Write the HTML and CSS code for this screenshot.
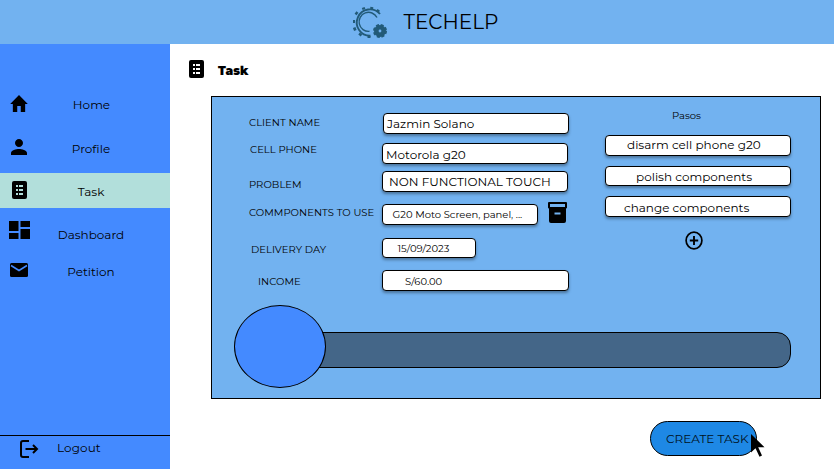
FILE: index.html
```html
<!DOCTYPE html>
<html lang="en">
<head>
<meta charset="utf-8">
<title>Techelp</title>
<link rel="stylesheet" href="styles.css">
</head>
<body>
<header class="topbar">
  <svg class="logo" width="36" height="36" viewBox="0 0 36 36" fill="none" stroke="#225a78">
    <path d="M29 10A13.200 13.200 0 1 0 19.500 31.800" stroke-width="1.900"/>
    <path d="M26 13.500A9.500 9.500 0 1 0 18.500 27.300" stroke-width="1.400"/>
    <path d="M26.500 7.500l1.300-1.600M20.500 5l.4-2M13 5.500l-.8-2M6.500 10L4.500 8.500M4 17.500H2M5 24.500l-2.500 1M10 29.500L8.500 31.500M18 32v2" stroke-width="3"/>
    <circle cx="29" cy="27" r="3.700" stroke-width="4.600"/>
    <circle cx="29" cy="27" r="6" stroke-width="2" stroke-dasharray="3 1.710"/>
  </svg>
  <h1 class="brand">TECHELP</h1>
</header>
<div class="shell">
  <aside class="sidebar">
    <nav class="nav">
      <a class="item home"><svg width="24" height="24" viewBox="0 0 24 24"><path d="M10 20v-6h4v6h5v-8h3L12 3 2 12h3v8z"/></svg><span>Home</span></a>
      <a class="item profile"><svg width="24" height="24" viewBox="0 0 24 24"><path d="M12 12c2.200 0 4-1.800 4-4s-1.800-4-4-4-4 1.800-4 4 1.800 4 4 4zm0 2c-2.700 0-8 1.300-8 4v2h16v-2c0-2.700-5.300-4-8-4z"/></svg><span>Profile</span></a>
      <a class="item task"><svg width="15" height="18" viewBox="0 0 15 18"><rect width="15" height="18" rx="2"/><path class="cells" d="M4 4h2v2H4zM7 4h4v2H7zM4 8h2v2H4zM7 8h4v2H7zM4 12h2v2H4zM7 12h4v2H7z"/></svg><span>Task</span></a>
      <a class="item dashboard"><svg width="21" height="18" viewBox="0 0 21 18"><path d="M0 0h9.500v10H0zM11.500 0H21v6h-9.500zM0 12h9.500v6H0zM11.500 8H21v10h-9.500z"/></svg><span>Dashboard</span></a>
      <a class="item petition"><svg width="18" height="14" viewBox="0 0 18 14"><rect width="18" height="14" rx="1.500"/><path d="M1 2.500l8 5 8-5" fill="none" stroke="#448aff" stroke-width="1.500"/></svg><span>Petition</span></a>
    </nav>
    <a class="logout"><svg width="19" height="18" viewBox="0 0 19 18" fill="none" stroke="#000" stroke-width="2"><path d="M9 1H3Q1 1 1 3v12q0 2 2 2h6M5.500 9H17M13 5l4 4-4 4"/></svg><span>Logout</span></a>
  </aside>
  <main class="main">
    <div class="heading">
      <svg width="15" height="18" viewBox="0 0 15 18"><rect width="15" height="18" rx="2"/><path class="cells white" d="M4 4h2v2H4zM7 4h4v2H7zM4 8h2v2H4zM7 8h4v2H7zM4 12h2v2H4zM7 12h4v2H7z"/></svg>
      <h2>Task</h2>
    </div>
    <section class="panel">
      <div class="columns">
        <div class="form">
          <div class="row client"><label><span>CLIENT NAME</span></label><div class="field"><span>Jazmin Solano</span></div></div>
          <div class="row phone"><label><span>CELL PHONE</span></label><div class="field"><span>Motorola g20</span></div></div>
          <div class="row problem"><label><span>PROBLEM</span></label><div class="field"><span>NON FUNCTIONAL TOUCH</span></div></div>
          <div class="row components"><label><span>COMMPONENTS TO USE</span></label><div class="field"><span>G20 Moto Screen, panel, ...</span></div>
            <svg class="archive" width="19" height="21" viewBox="0 0 19 21"><path fill-rule="evenodd" d="M1 0h17q1 0 1 1v4.500q0 1-1 1V19q0 2-2 2H3q-2 0-2-2V6.500Q0 6.500 0 5.500V1Q0 0 1 0zM2 2v3h15V2zM6.500 10.500v2h6v-2z"/></svg></div>
          <div class="row delivery"><label><span>DELIVERY DAY</span></label><div class="field"><span>15/09/2023</span></div></div>
          <div class="row income"><label><span>INCOME</span></label><div class="field"><span>S/60.00</span></div></div>
        </div>
        <div class="steps">
          <h3>Pasos</h3>
          <div class="field disarm"><span>disarm cell phone g20</span></div>
          <div class="field polish"><span>polish components</span></div>
          <div class="field change"><span>change components</span></div>
          <svg class="add" width="18" height="19" viewBox="0 0 18 19" fill="none" stroke="#000"><ellipse cx="9" cy="9.500" rx="7.900" ry="8.400" stroke-width="1.700"/><path d="M9 5v9M4.800 9.500h8.400" stroke-width="1.900"/></svg>
        </div>
      </div>
      <div class="progress"><div class="knob"></div><div class="track"></div></div>
    </section>
    <button class="create"><span>CREATE TASK</span>
      <svg class="cursor" width="15" height="24" viewBox="0 0 15 24"><path d="M0 0v18.500l4.500-4.300L8.500 22.800l2.500-1.200-3.800-8.300H13.500z"/></svg></button>
  </main>
</div>
</body>
</html>
```
FILE: styles.css
```css
* { box-sizing: border-box; }
body { margin: 0; width: 834px; height: 469px; overflow: hidden; background: #fff; color: #000; font: 400 12px/16px Montserrat, Inter, sans-serif; }
h1, h2, h3 { margin: 0; }
svg { display: block; flex: none; }
span { white-space: nowrap; }
.topbar { height: 44px; background: #72b2f0; display: flex; align-items: center; padding-left: 351px; }
.brand { margin-left: 16.5px; font-size: 20px; line-height: 24px; font-weight: 400; }
.shell { display: flex; height: 425px; }
.sidebar { width: 170px; background: #448aff; display: flex; flex-direction: column; }
.nav { flex: 1; padding-top: 39px; }
.item { display: grid; grid-template-columns: 38px 106px; align-items: center; justify-items: center; height: 44px; }
.item svg { margin-bottom: 3px; }
.home span { padding-left: 1px; }
.home svg { transform: scale(.88, 1); }
.profile svg { margin-bottom: 4px; }
.task { height: 35px; margin-top: 2px; background: #b2dfdb; }
.task svg { margin-bottom: 1px; }
.task span { padding-top: 2px; }
.cells { fill: #b2dfdb; }
.cells.white { fill: #fff; }
.dashboard { height: 38px; margin-top: 8px; }
.dashboard svg { margin: 0 0 10px; }
.petition { height: 36px; }
.petition svg { margin: 0 1px 4px 0; }
.logout { height: 34px; border-top: 1px solid #000; display: flex; align-items: flex-start; padding: 4px 0 0 20px; letter-spacing: 0.1px; }
.logout span { margin-left: 18px; }
.main { flex: 1; display: flex; flex-direction: column; }
.heading { height: 52px; display: flex; align-items: center; padding-left: 19px; }
.heading h2 { margin-left: 14px; padding-top: 2px; font-size: 12px; font-weight: 900; }
.heading svg { margin-top: -2px; }
.panel { width: 610px; height: 303px; margin-left: 41px; border: 1px solid #000; background: #72b2f0; }
.columns { display: flex; height: 208px; }
.form { width: 393px; padding-top: 16px; }
.row { display: flex; align-items: center; height: 21px; }
.row label { width: 170px; padding-left: 37px; font-size: 10px; line-height: 14px; letter-spacing: 0.04px; }
.field { height: 21px; width: 186px; border: 1px solid #000; border-radius: 4px; background: #fff; box-shadow: 0 2px 3px rgba(0, 0, 0, .35); display: flex; align-items: center; flex: none; }
.client label { padding-bottom: 2px; }
.client .field { margin-left: 1px; padding-left: 3px; }
.phone { margin-top: 9px; }
.phone label { padding-left: 38px; padding-bottom: 7px; }
.phone .field { padding: 2px 0 0 3px; }
.problem { margin-top: 7px; }
.problem label { padding-top: 6px; }
.problem .field { padding-left: 6px; }
.components { margin-top: 12px; }
.components label { padding-bottom: 3px; }
.components .field { width: 156px; padding-left: 9.5px; font-size: 10px; }
.archive { margin: -4px 0 0 10px; }
.delivery { margin-top: 13px; height: 20px; }
.delivery label { padding: 4px 0 0 39px; }
.delivery .field { width: 94px; height: 20px; padding: 1px 0 0 14.5px; font-size: 10px; }
.income { margin-top: 12px; }
.income label { padding: 3px 0 0 46px; }
.income .field { width: 187px; padding: 2px 0 0 22px; font-size: 10px; }
.steps { width: 186px; padding-top: 12px; display: flex; flex-direction: column; }
.steps h3 { font-size: 10px; line-height: 14px; font-weight: 400; padding-left: 67px; }
.steps .field { width: 186px; margin-top: 10px; }
.steps .disarm { margin-top: 12px; padding: 0 0 1px 21px; }
.steps .polish { height: 20px; padding: 2px 0 0 30px; }
.steps .change { padding: 2px 0 0 18px; }
.add { margin: 14px 0 0 80px; }
.progress { display: flex; align-items: flex-start; padding-left: 22px; }
.knob { width: 92px; height: 83px; border: 1px solid #000; border-radius: 50%; background: #448aff; z-index: 1; }
.track { width: 485px; height: 36px; margin: 27px 0 0 -20px; border: 1px solid #000; border-radius: 0 14px 14px 0; background: #446688; }
.create { position: relative; width: 107px; height: 35px; margin: 22px 0 0 480px; padding: 0 0 0 15px; border: 1px solid #000; border-radius: 18px; background: #1e88e5; font: 400 12px/16px Montserrat, Inter, sans-serif; color: #012; text-align: left; }
.cursor { position: absolute; left: 100px; top: 12px; }
```
